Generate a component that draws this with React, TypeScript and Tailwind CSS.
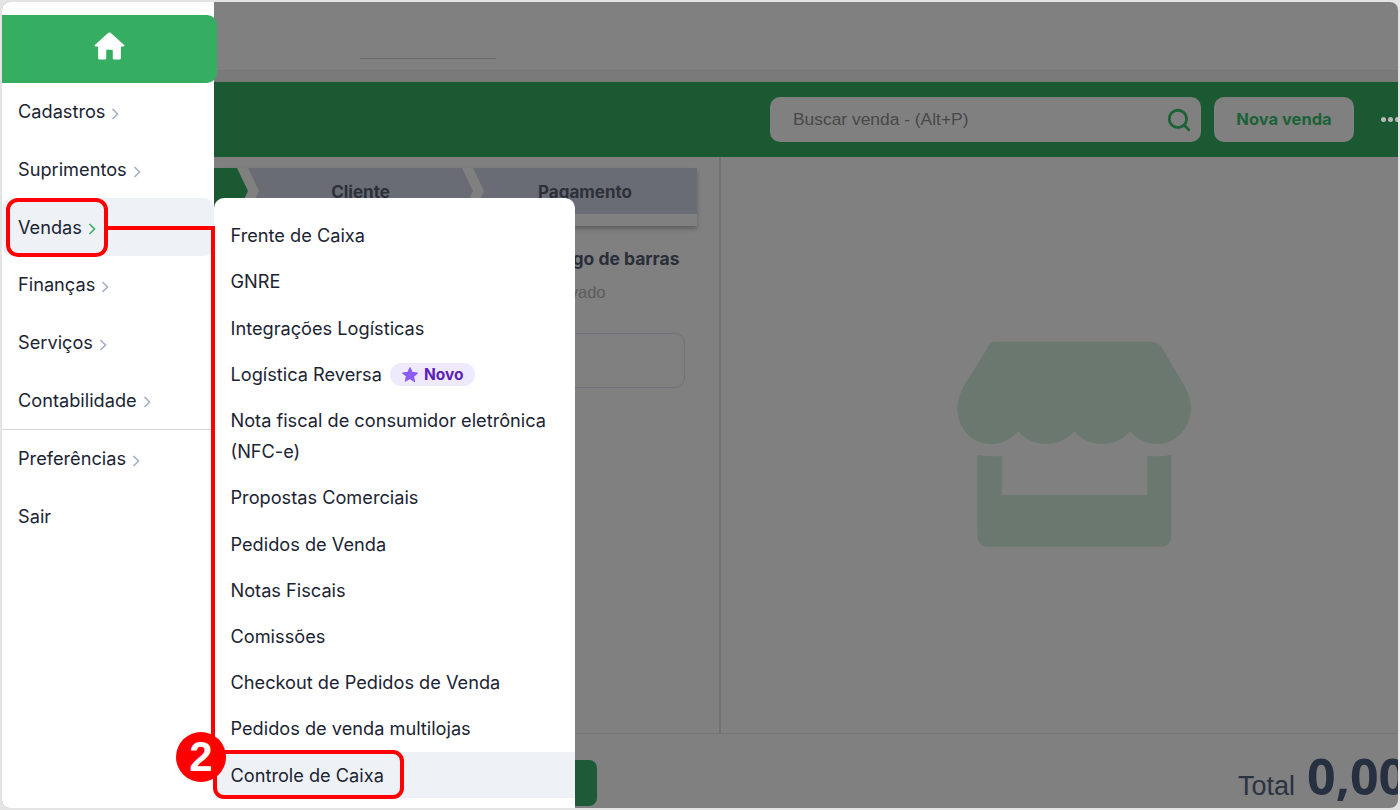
import { Search } from "lucide-react";

const side = [
  { t: "Cadastros" },
  { t: "Suprimentos" },
  { t: "Vendas", active: true },
  { t: "Finanças" },
  { t: "Serviços" },
  { t: "Contabilidade" },
];

const menu = [
  "Frente de Caixa",
  "GNRE",
  "Integrações Logísticas",
  "Logística Reversa",
  "Nota fiscal de consumidor eletrônica (NFC-e)",
  "Propostas Comerciais",
  "Pedidos de Venda",
  "Notas Fiscais",
  "Comissões",
  "Checkout de Pedidos de Venda",
  "Pedidos de venda multilojas",
  "Controle de Caixa",
];

function SideItem({ t, active }: { t: string; active?: boolean }) {
  return (
    <div className={`h-[57.7px] flex items-center pl-4 rounded-[10px] text-[18.2px] text-[#1b2433] ${active ? "bg-[#eef1f6]" : ""}`}>
      <span>{t}</span>
      <svg
        viewBox="0 0 8 12"
        className={`w-[8px] h-[12px] ml-[6px] mt-[4px] fill-none stroke-[1.6] ${active ? "stroke-[#36ae62]" : "stroke-[#a3aec6]"}`}
      >
        <path d="M1.5 1L6.5 6L1.5 11" />
      </svg>
    </div>
  );
}

export default function App() {
  return (
    <div className="w-[1400px] h-[810px] bg-[#e4e4e4] p-[2px] font-['Inter',sans-serif]">
      <div className="relative w-full h-full flex rounded-lg overflow-hidden bg-[#808080]">
        {/* Sidebar */}
        <aside className="relative z-10 w-[212px] shrink-0 bg-white pt-[13px]">
          <div className="w-[215px] h-[68px] bg-[#36ae62] rounded-r-[10px] flex items-center justify-center">
            <svg viewBox="0 0 24 24" className="w-[39px] h-[39px] fill-white mb-[6px] -ml-[1px]">
              <path d="M10 19v-5h4v5c0 .55.45 1 1 1h3c.55 0 1-.45 1-1v-7h1.7c.46 0 .68-.57.33-.87L12.67 3.6c-.38-.34-.96-.34-1.34 0l-8.36 7.53c-.34.3-.13.87.33.87H5v7c0 .55.45 1 1 1h3c.55 0 1-.45 1-1z" />
            </svg>
          </div>
          <div>
            {side.map((s) => (
              <SideItem key={s.t} t={s.t} active={s.active} />
            ))}
          </div>
          <div className="border-t border-[#d4d4d4]">
            <SideItem t="Preferências" />
            <div className="h-[57.7px] flex items-center pl-4 text-[18.2px] text-[#1b2433]">Sair</div>
          </div>
        </aside>

        {/* Main dimmed app */}
        <main className="flex-1 min-w-0 flex flex-col overflow-hidden">
          <div className="h-[69px] border-b border-[#777777] pt-[56px] pl-[146px]">
            <div className="w-[136px] h-px bg-[#6a6a6a]" />
          </div>
          <div className="h-[11px] bg-[#7a7a7a]" />
          <div className="h-[75px] shrink-0 bg-[#1b5932] flex items-center pl-[556px] overflow-hidden">
            <div className="w-[431px] h-[45px] shrink-0 rounded-[10px] bg-[#808080] flex items-center pl-[23px] pr-[9px] justify-between font-['Liberation_Sans',sans-serif] text-[17.4px] text-[#484848]">
              <span>Buscar venda - (Alt+P)</span>
              <Search size={26} strokeWidth={2.6} className="text-[#1b6236]" />
            </div>
            <div className="ml-[13px] w-[140px] h-[45px] shrink-0 rounded-[10px] bg-[#808080] flex items-center justify-center text-[16.5px] font-bold text-[#1b6236]">
              Nova venda
            </div>
            <div className="ml-[27px] flex gap-[2px] shrink-0">
              <span className="w-[5px] h-[5px] rounded-full bg-[#b9b9b9]" />
              <span className="w-[5px] h-[5px] rounded-full bg-[#b9b9b9]" />
              <span className="w-[5px] h-[5px] rounded-full bg-[#b9b9b9]" />
            </div>
          </div>
          <div className="flex-1 flex min-h-0">
            <section className="w-[507px] shrink-0 border-r-2 border-[#6e7278] pt-[11px]">
              <div className="w-[483px] h-[58px] shadow-[0_3px_4px_rgba(0,0,0,0.25)]">
                <div className="flex h-[46px]">
                  <div className="w-[34px] bg-[#1b5932] [clip-path:polygon(0_0,23px_0,100%_50%,23px_100%,0_100%)]" />
                  <div className="w-[225px] pt-[4px] bg-[#696c74] flex items-center justify-center text-[17px] font-bold text-[#2c303a] [clip-path:polygon(0_0,214px_0,100%_50%,214px_100%,0_100%,11px_50%)]">
                    Cliente
                  </div>
                  <div className="w-[224px] pt-[4px] bg-[#696c74] flex items-center justify-center text-[17px] font-bold text-[#2c303a] [clip-path:polygon(0_0,100%_0,100%_100%,0_100%,11px_50%)]">
                    Pagamento
                  </div>
                </div>
              </div>
              <div className="pl-[319px] pr-[34px] pt-[21px]">
                <div className="text-[17.5px] font-bold text-[#2a2e39] whitespace-nowrap leading-[24px]">Código de barras</div>
                <div className="-ml-[10px] text-[16.5px] text-[#5c5c5c] leading-[24px] mt-[9px] font-['Liberation_Sans',sans-serif]">Desativado</div>
                <div className="mt-[29px] h-[55px] rounded-[10px] border border-[#6e7278]" />
              </div>
            </section>
            <section className="flex-1 flex items-center justify-center pl-[30px]">
              <svg viewBox="0 0 870 750" className="w-[290px] h-[250px] fill-[#6a7870]">
                <path d="M195 65H665Q685 65 697 85L765 200Q783 235 783 265C783 325 735 372 685 372C650 372 620 358 600 333C580 358 550 372 517 372C484 372 452 358 433 333C414 358 382 372 349 372C316 372 284 358 265 333C245 358 215 372 182 372C125 372 82 325 82 265Q82 235 100 200L172 85Q180 65 195 65Z" />
                <path d="M142 405Q180 412 215 407V525H652V407Q690 412 724 405V645Q724 680 690 680H175Q142 680 142 645Z" />
              </svg>
            </section>
          </div>
          <div className="h-[75px] shrink-0 border-t border-[#757575] flex items-end overflow-hidden">
            <div className="ml-[300px] mb-[2px] w-[83px] h-[46px] rounded-lg bg-[#1f5a38] shrink-0" />
            <div className="ml-[641px] flex items-baseline shrink-0">
              <span className="font-['Liberation_Sans',sans-serif] text-[27px] text-[#2c3340]">Total</span>
              <span className="ml-[12px] font-['Open_Sans',sans-serif] font-bold text-[50px] leading-[64px] text-[#273040]">0,00</span>
            </div>
          </div>
        </main>

        {/* Submenu over the content */}
        <div className="absolute z-20 left-[212px] top-[196px] bottom-0 w-[361px] bg-white rounded-t-[10px] pt-[14.6px] text-[18.2px] text-[#1b2433]">
          {menu.map((m) => (
            <div key={m} className={`pl-[16.5px] pr-[17px] py-[7.5px] leading-[31.2px] ${m === "Controle de Caixa" ? "bg-[#eef1f6]" : ""}`}>
              {m}
              {m === "Logística Reversa" && (
                <span className="ml-[8px] inline-flex items-center align-[-3px] h-[23px] w-[85px] pl-[11px] rounded-full bg-[#efe9fd] text-[15.5px] font-bold leading-none text-[#5b21b6]">
                  <svg viewBox="0 0 24 24" className="w-[18px] h-[18px] fill-[#8b5cf6] mr-[5px]">
                    <path d="M12 2.2l2.9 6.3 6.9.8-5.1 4.7 1.4 6.8L12 16.7l-6.1 3.4 1.4-6.8L2.2 9.3l6.9-.8z" stroke="#8b5cf6" strokeWidth="1.5" strokeLinejoin="round" />
                  </svg>
                  Novo
                </span>
              )}
            </div>
          ))}
        </div>

        {/* Red annotations */}
        <div className="absolute z-30 left-[4px] top-[196px] w-[102px] h-[59px] border-[4px] border-[#ff0000] rounded-[12px]" />
        <div className="absolute z-30 left-[104px] top-[224px] w-[109px] h-[4px] bg-[#ff0000]" />
        <div className="absolute z-30 left-[209px] top-[224px] w-[4px] h-[526px] bg-[#ff0000]" />
        <div className="absolute z-30 left-[211px] top-[748px] w-[191px] h-[49px] border-[4px] border-[#ff0000] rounded-[11px]" />
        <div className="absolute z-40 left-[174px] top-[730px] w-[50px] h-[50px] rounded-full bg-[#ff0000] flex items-center justify-center text-white text-[42px] font-bold leading-none font-['Liberation_Sans',sans-serif]">
          2
        </div>
      </div>
    </div>
  );
}
